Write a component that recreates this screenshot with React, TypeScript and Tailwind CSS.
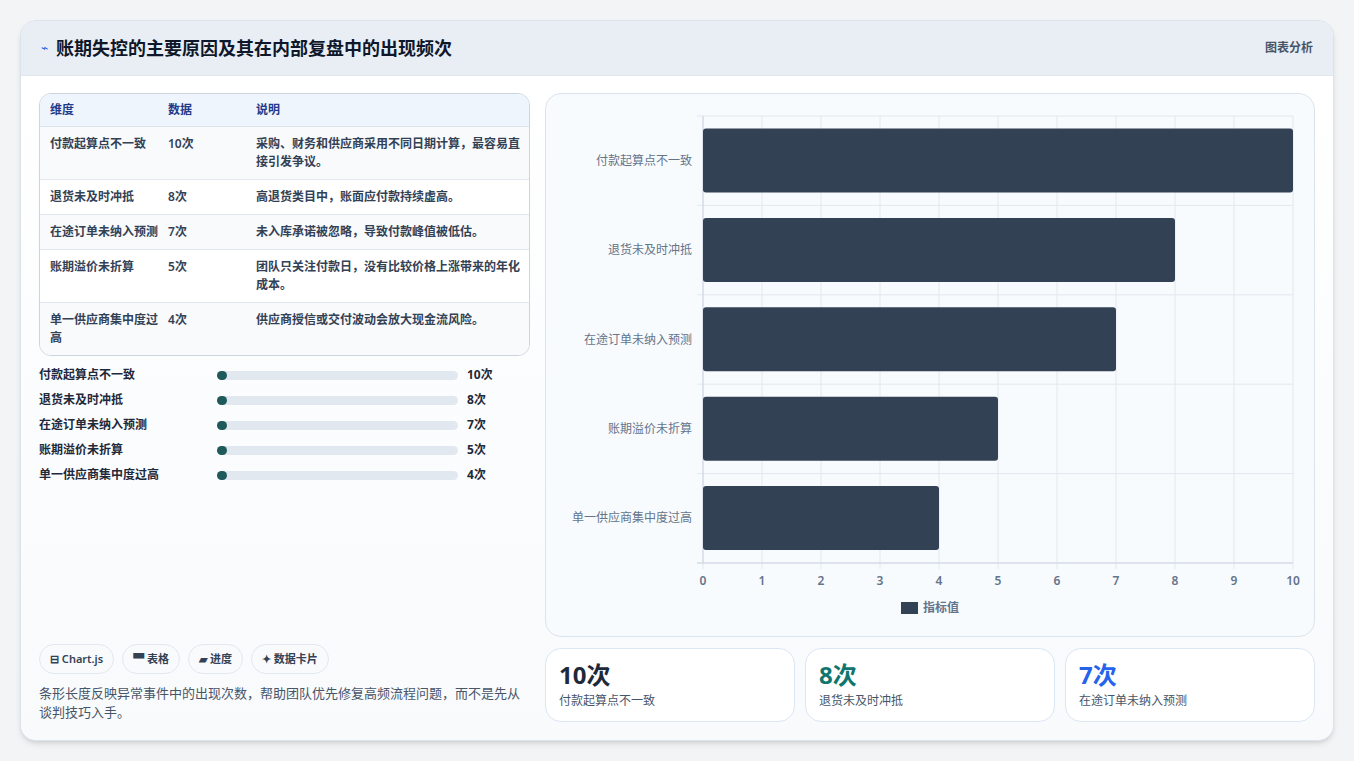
const rows = [
  { name: "付款起算点不一致", value: 10, desc: "采购、财务和供应商采用不同日期计算，最容易直接引发争议。" },
  { name: "退货未及时冲抵", value: 8, desc: "高退货类目中，账面应付款持续虚高。" },
  { name: "在途订单未纳入预测", value: 7, desc: "未入库承诺被忽略，导致付款峰值被低估。" },
  { name: "账期溢价未折算", value: 5, desc: "团队只关注付款日，没有比较价格上涨带来的年化成本。" },
  { name: "单一供应商集中度过高", value: 4, desc: "供应商授信或交付波动会放大现金流风险。" },
];

const font = { fontFamily: '"Noto Sans", "Noto Sans CJK SC", sans-serif' };

function Chart() {
  // plot area in svg coords
  const x0 = 157, x1 = 747, y0 = 22, y1 = 469;
  const step = (y1 - y0) / 5;
  const unit = (x1 - x0) / 10;
  return (
    <svg width="767" height="541" className="block">
      {Array.from({ length: 11 }).map((_, i) => (
        <line key={i} x1={x0 + i * unit} x2={x0 + i * unit} y1={y0} y2={y1 + 6} stroke="#e2e8f0" />
      ))}
      {Array.from({ length: 6 }).map((_, i) => (
        <line key={i} x1={x0 - 6} x2={x1} y1={y0 + i * step} y2={y0 + i * step} stroke="#e2e8f0" />
      ))}
      <line x1={x0} x2={x0} y1={y0} y2={y1} stroke="#cbd5e1" />
      <line x1={x0 - 6} x2={x1} y1={y1} y2={y1} stroke="#cbd5e1" />
      {rows.map((r, i) => (
        <g key={r.name}>
          <rect x={x0} y={y0 + i * step + 12.5} width={r.value * unit} height={64} rx={3} fill="#334155" />
          <text x={x0 - 11} y={y0 + i * step + step / 2 + 4} textAnchor="end" fontSize="12" fill="#64748b">{r.name}</text>
        </g>
      ))}
      {Array.from({ length: 11 }).map((_, i) => (
        <text key={i} x={x0 + i * unit} y={y1 + 22} textAnchor="middle" fontSize="12" fontWeight="600" fill="#64748b">{i}</text>
      ))}
      <rect x={355} y={508} width={17} height={12} fill="#334155" />
      <text x={377} y={518} fontSize="12" fontWeight="600" fill="#64748b">指标值</text>
    </svg>
  );
}

export default function App() {
  const stats = [
    { v: "10次", c: "text-[#1e293b]", l: "付款起算点不一致" },
    { v: "8次", c: "text-[#0f766e]", l: "退货未及时冲抵" },
    { v: "7次", c: "text-[#2563eb]", l: "在途订单未纳入预测" },
  ];
  return (
    <div className="min-h-[761px] bg-[#f3f4f6] p-5 pb-5" style={font}>
      <div className="flex h-[721px] flex-col overflow-hidden rounded-2xl border border-[#dbe3ec] bg-white shadow-md">
        <div className="flex h-[55px] items-center justify-between border-b border-[#e2e8f0] bg-[#e9eef5] px-5">
          <div className="flex items-center gap-2">
            <span className="text-xs text-[#2563eb]">⌁</span>
            <h1 className="text-lg font-bold text-[#0f172a]">账期失控的主要原因及其在内部复盘中的出现频次</h1>
          </div>
          <span className="text-xs font-semibold text-[#475569]">图表分析</span>
        </div>
        <div className="flex flex-1 gap-[15px] bg-gradient-to-b from-white to-[#f8fafc] px-[18px] pt-[17px] pb-[18px]">
          <div className="flex w-[491px] flex-col">
            <div className="overflow-hidden rounded-xl border border-[#cbd5e1] text-xs text-[#334155]">
              <div className="flex h-[33px] items-center border-b border-[#dbe3ec] bg-[#eef5fd] font-bold text-[#1e3a8a]">
                <div className="w-[128px] pl-[10px]">维度</div>
                <div className="w-[88px]">数据</div>
                <div className="flex-1">说明</div>
              </div>
              {rows.map((r, i) => (
                <div key={r.name} className={`flex border-[#e2e8f0] py-[8px] leading-[18px] ${i > 0 ? "border-t" : ""} ${i % 2 ? "bg-white" : "bg-[#f8fafc]"}`}>
                  <div className="w-[128px] pl-[10px] pr-2 font-semibold">{r.name}</div>
                  <div className="w-[88px] font-semibold">{r.value}次</div>
                  <div className="flex-1 pr-2 font-semibold">{r.desc}</div>
                </div>
              ))}
            </div>
            <div className="mt-[10px] flex flex-col gap-[7px]">
              {rows.map((r) => (
                <div key={r.name} className="flex h-[18px] items-center text-xs font-semibold text-[#1e293b]">
                  <div className="w-[178px]">{r.name}</div>
                  <div className="h-[9px] w-[241px] rounded-full bg-[#e2e8f0]">
                    <div className="h-[9px] w-[10px] rounded-full bg-[#1e5a5a]" />
                  </div>
                  <div className="ml-[9px] font-bold">{r.value}次</div>
                </div>
              ))}
            </div>
            <div className="mt-auto flex gap-2 text-[11px] font-semibold text-[#334155]">
              {["⊟ Chart.js", "▀ 表格", "▰ 进度", "✦ 数据卡片"].map((t) => (
                <span key={t} className="rounded-full border border-[#e2e8f0] bg-[#f8fafc] px-[10px] py-[6px]">{t}</span>
              ))}
            </div>
            <p className="mt-[10px] text-[13px] leading-[19px] text-[#475569]">
              条形长度反映异常事件中的出现次数，帮助团队优先修复高频流程问题，而不是先从谈判技巧入手。
            </p>
          </div>
          <div className="flex flex-1 flex-col gap-[11px]">
            <div className="h-[544px] rounded-2xl border border-[#dbe3ec] bg-[#f8fbfd]">
              <Chart />
            </div>
            <div className="grid flex-1 grid-cols-3 gap-[10px]">
              {stats.map((s) => (
                <div key={s.l} className="rounded-2xl border border-[#dbe7f5] bg-white px-[13px] pt-[10px]">
                  <div className={`text-[24px] font-bold leading-[32px] ${s.c}`}>{s.v}</div>
                  <div className="mt-[2px] text-xs text-[#475569]">{s.l}</div>
                </div>
              ))}
            </div>
          </div>
        </div>
      </div>
    </div>
  );
}
